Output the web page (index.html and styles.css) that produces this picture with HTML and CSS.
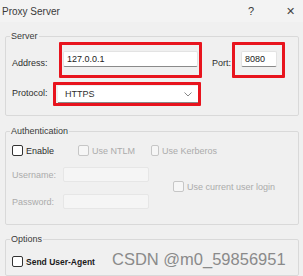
FILE: index.html
```html
<!DOCTYPE html>
<html lang="en">
<head>
    <meta charset="UTF-8">
    <title>Proxy Server</title>
    <link rel="stylesheet" href="styles.css">
</head>
<body>
    <div class="dialog">
        <div class="titlebar">
            <span class="title">Proxy Server</span>
            <span class="help">?</span>
            <span class="close">&#x2715;</span>
        </div>

        <div class="content">
            <fieldset class="group server">
                <legend>Server</legend>
                <div class="row row-address">
                    <label class="label lbl-address">Address:</label>
                    <div class="mark mark-address"><div class="field">127.0.0.1</div></div>
                    <label class="label lbl-port">Port:</label>
                    <div class="mark mark-port"><div class="field">8080</div></div>
                </div>
                <div class="row row-protocol">
                    <label class="label lbl-protocol">Protocol:</label>
                    <div class="mark mark-protocol">
                        <div class="select">
                            <span>HTTPS</span>
                            <svg class="chevron" width="8" height="5" viewBox="0 0 8 5"><path d="M0.5 0.5 L4 4 L7.5 0.5" fill="none" stroke="#888" stroke-width="1"/></svg>
                        </div>
                    </div>
                </div>
            </fieldset>

            <fieldset class="group auth">
                <legend>Authentication</legend>
                <div class="row checks">
                    <label class="check"><span class="box"></span>Enable</label>
                    <label class="check disabled ntlm"><span class="box"></span>Use NTLM</label>
                    <label class="check disabled"><span class="box"></span>Use Kerberos</label>
                </div>
                <div class="row cred user">
                    <label class="label disabled">Username:</label>
                    <div class="field off"></div>
                </div>
                <div class="row current">
                    <label class="check disabled"><span class="box"></span>Use current user login</label>
                </div>
                <div class="row cred pass">
                    <label class="label disabled">Password:</label>
                    <div class="field off"></div>
                </div>
            </fieldset>

            <fieldset class="group options">
                <legend>Options</legend>
                <div class="row">
                    <label class="check strong"><span class="box"></span>Send User-Agent</label>
                </div>
            </fieldset>
        </div>

        <div class="watermark">CSDN @m0_59856951</div>
    </div>
</body>
</html>
```

FILE: styles.css
```css
body {
    margin: 0;
    background: #f0f0f0;
    font-family: 'Liberation Sans', Arial, sans-serif;
    font-size: 9px;
    color: #2e2e2e;
    overflow: hidden;
}
.dialog {
    position: relative;
    width: 303px;
    height: 276px;
    background: #f0f0f0;
}
.titlebar {
    display: flex;
    align-items: center;
    height: 22px;
    padding-left: 2px;
    background: #f3f3f3;
    font-size: 10px;
    color: #3a3a3a;
}
.title {
    flex: 1;
}
.help {
    width: 38px;
    font-size: 11px;
}
.close {
    width: 17px;
    font-size: 11px;
    color: #444;
}
.content {
    padding: 9px 4px 0 5px;
}
.group {
    margin: 0;
    padding: 0 6px 0 6px;
    border: 1px solid #d9d9d9;
    border-radius: 2px;
    min-width: 0;
}
.group legend {
    padding: 0 1px;
    margin-left: -2px;
    font-size: 9px;
    color: #3a3a3a;
}
.row {
    display: flex;
    align-items: center;
}
.label {
    white-space: nowrap;
}
.disabled {
    color: #ababab;
}

/* red annotation frames */
.mark {
    border: 3px solid #e8141e;
    border-radius: 1px;
    background: #f0f0f0;
}
.field {
    height: 16px;
    line-height: 15px;
    padding: 0 3px;
    background: #fff;
    border: 1px solid #e3e3e3;
    border-bottom-color: #8a8a8a;
    border-radius: 2px;
    box-sizing: border-box;
    color: #222;
}

.server {
    padding-top: 4px;
    padding-bottom: 9px;
}
.row-address {
    height: 30px;
}
.lbl-address {
    width: 47px;
    margin-top: 5px;
}
.mark-address {
    width: 136px;
    height: 24px;
    padding: 6px 0 0 1px;
    box-sizing: content-box;
}
.mark-address .field {
    width: 135px;
}
.lbl-port {
    margin: 5px 0 0 10px;
    width: 20px;
}
.mark-port {
    width: 47px;
    height: 24px;
    padding: 6px 0 0 0;
}
.mark-port .field {
    width: 36px;
    margin-left: 6px;
}
.row-protocol {
    margin-top: 7px;
}
.lbl-protocol {
    width: 41px;
    margin-top: -2px;
}
.mark-protocol {
    width: 142px;
    height: 18px;
}
.select {
    display: flex;
    align-items: center;
    justify-content: space-between;
    height: 16px;
    margin: 1px 0 0 2px;
    padding: 0 6px 0 7px;
    background: #fff;
    border-bottom: 1px solid #8a8a8a;
}
.chevron {
    display: block;
}

.auth {
    margin-top: 10px;
    height: 97px;
}
.check {
    display: flex;
    align-items: center;
    white-space: nowrap;
}
.box {
    width: 9px;
    height: 9px;
    margin-right: 3px;
    border: 1px solid #333;
    border-radius: 2px;
    background: #fff;
}
.check.disabled .box {
    border-color: #c6c6c6;
    background: #f6f6f6;
}
.checks {
    height: 11px;
    margin-top: 9px;
}
.checks .check {
    width: 66px;
}
.checks .ntlm {
    width: 73px;
}
.cred .label {
    width: 51px;
}
.user {
    margin-top: 11px;
}
.field.off {
    width: 86px;
    height: 15px;
    background: #f5f5f5;
    border: 1px solid #e6e6e6;
}
.current {
    height: 11px;
    margin-top: -1px;
    padding-left: 161px;
}
.pass {
    margin-top: 2px;
}

.options {
    margin-top: 9px;
    height: 40px;
}
.options .check {
    margin-top: 12px;
}
.strong {
    color: #1a1a1a;
    font-weight: bold;
    font-size: 8.5px;
}
.watermark {
    position: absolute;
    left: 112px;
    top: 250px;
    font-size: 16.5px;
    color: #8a8a8a;
}
```
